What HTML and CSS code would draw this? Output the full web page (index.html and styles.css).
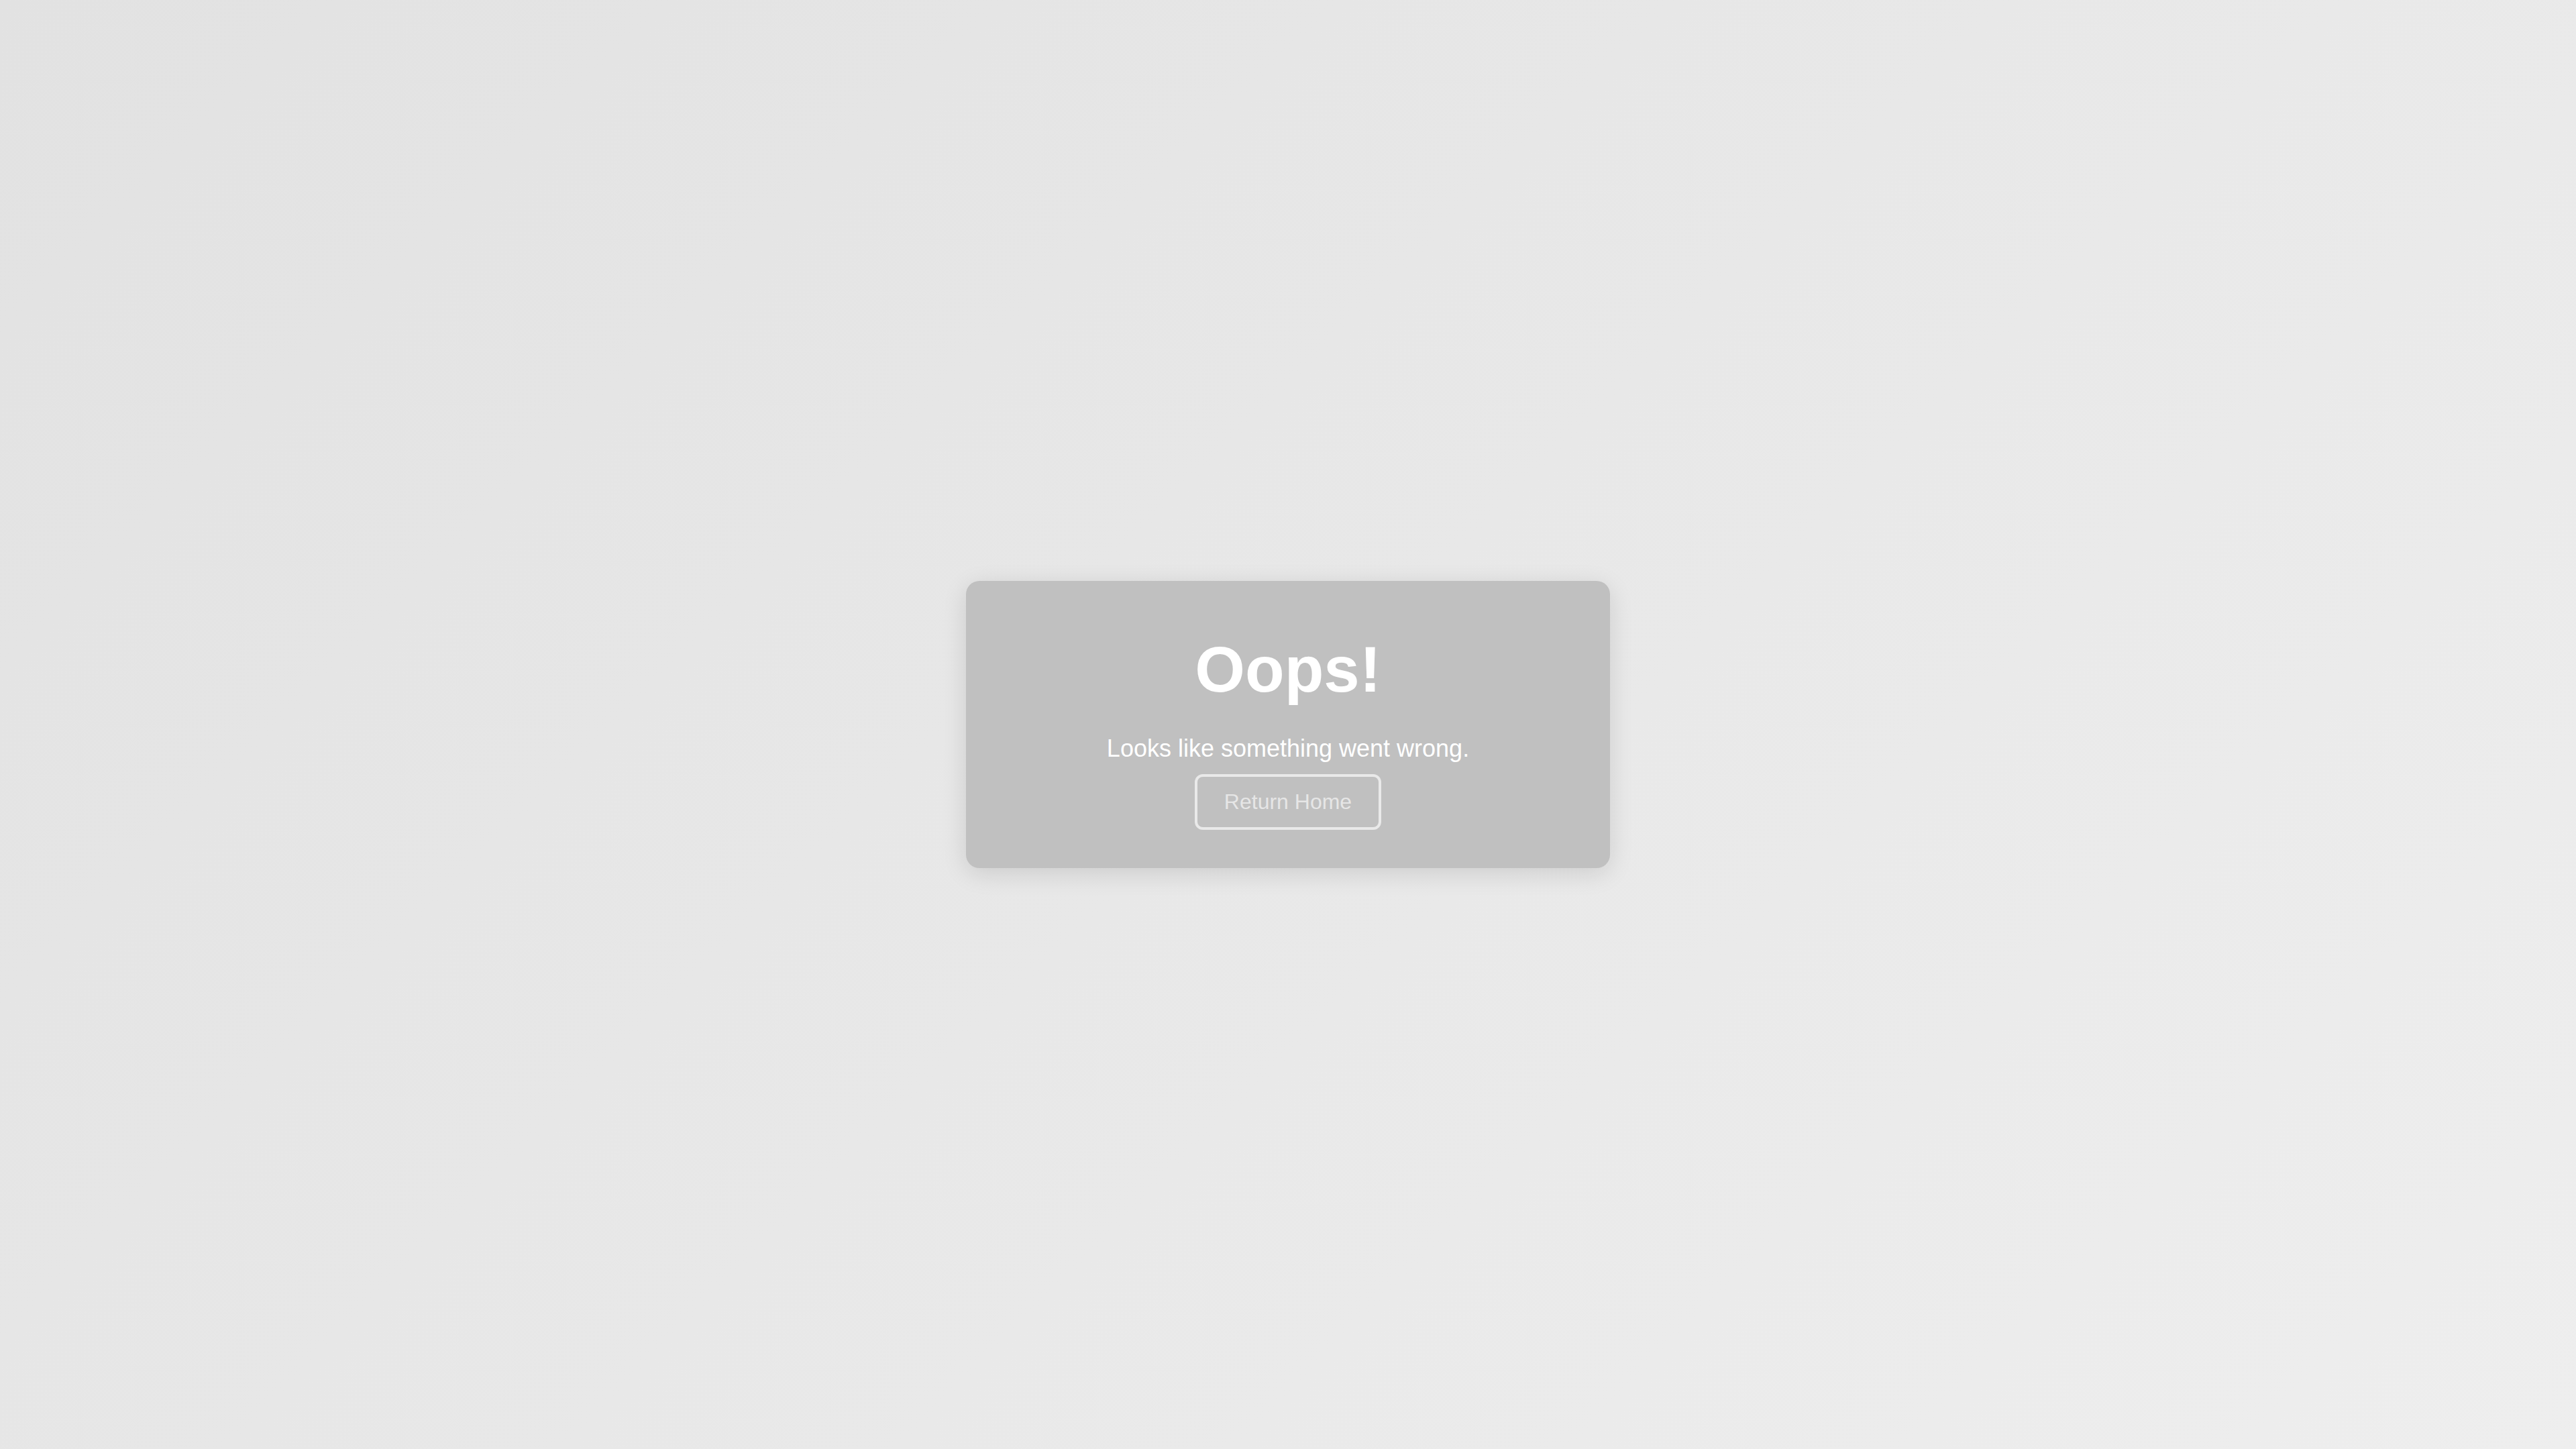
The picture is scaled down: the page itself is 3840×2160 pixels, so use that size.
FILE: index.html
```html
<!DOCTYPE html>
<html lang="en">
<head>
<meta charset="utf-8">
<title>Oops!</title>
<link rel="stylesheet" href="styles.css">
</head>
<body>
<main class="page">
  <section class="card">
    <h1 class="title">Oops!</h1>
    <p class="message">Looks like something went wrong.</p>
    <a class="btn" href="#">Return Home</a>
  </section>
</main>
</body>
</html>
```
FILE: styles.css
```css
html, body {
  margin: 0;
  padding: 0;
  height: 100%;
}
body {
  font-family: "Liberation Sans", Arial, sans-serif;
  background: linear-gradient(135deg, #e2e2e2 0%, #e8e8e8 50%, #eeeeee 100%);
}
.page {
  height: 100vh;
  display: flex;
  align-items: center;
  justify-content: center;
}
.card {
  width: 960px;
  box-sizing: border-box;
  padding: 77px 40px 57px;
  background: #c0c0c0;
  border-radius: 20px;
  box-shadow: 0 8px 36px rgba(0, 0, 0, 0.12);
  display: flex;
  flex-direction: column;
  align-items: center;
  text-align: center;
}
.title {
  margin: 0;
  font-size: 96px;
  font-weight: bold;
  line-height: normal;
  color: #ffffff;
}
.message {
  margin: 42px 0 17px;
  font-size: 36px;
  line-height: normal;
  color: #ffffff;
}
.btn {
  display: inline-block;
  padding: 19px 40px;
  border: 4px solid #e9e9e9;
  border-radius: 12px;
  font-size: 32px;
  line-height: normal;
  color: #e6e6e6;
  text-decoration: none;
  background: transparent;
}
```
